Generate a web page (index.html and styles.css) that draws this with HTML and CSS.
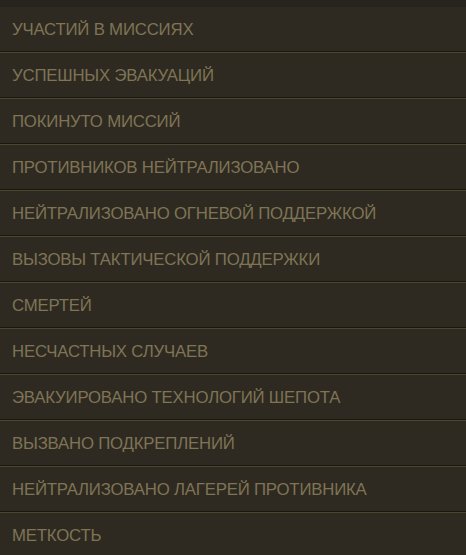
FILE: index.html
```html
<!DOCTYPE html>
<html lang="ru">
<head>
<meta charset="utf-8">
<link rel="stylesheet" href="styles.css">
</head>
<body>
<div class="top"></div>
<ul class="list">
  <li class="row">УЧАСТИЙ В МИССИЯХ</li>
  <li class="row">УСПЕШНЫХ ЭВАКУАЦИЙ</li>
  <li class="row">ПОКИНУТО МИССИЙ</li>
  <li class="row">ПРОТИВНИКОВ НЕЙТРАЛИЗОВАНО</li>
  <li class="row">НЕЙТРАЛИЗОВАНО ОГНЕВОЙ ПОДДЕРЖКОЙ</li>
  <li class="row">ВЫЗОВЫ ТАКТИЧЕСКОЙ ПОДДЕРЖКИ</li>
  <li class="row">СМЕРТЕЙ</li>
  <li class="row">НЕСЧАСТНЫХ СЛУЧАЕВ</li>
  <li class="row">ЭВАКУИРОВАНО ТЕХНОЛОГИЙ ШЕПОТА</li>
  <li class="row">ВЫЗВАНО ПОДКРЕПЛЕНИЙ</li>
  <li class="row">НЕЙТРАЛИЗОВАНО ЛАГЕРЕЙ ПРОТИВНИКА</li>
  <li class="row">МЕТКОСТЬ</li>
</ul>
</body>
</html>
```
FILE: styles.css
```css
html, body {
  margin: 0;
  padding: 0;
  background: #2e2a21;
  height: 555px;
  overflow: hidden;
}
.top {
  height: 7px;
  background: #27241e;
}
.list {
  list-style: none;
  margin: 0;
  padding: 0;
}
.row {
  box-sizing: border-box;
  height: 45px;
  display: flex;
  align-items: center;
  padding-left: 12px;
  padding-top: 1px;
  border-bottom: 1px solid #19170f;
  font-family: "Liberation Sans", Arial, sans-serif;
  font-size: 16.8px;
  color: #7f7455;
  letter-spacing: -0.2px;
}
.row + .row {
  height: 46px;
  border-top: 1px solid #4b4631;
}
```
